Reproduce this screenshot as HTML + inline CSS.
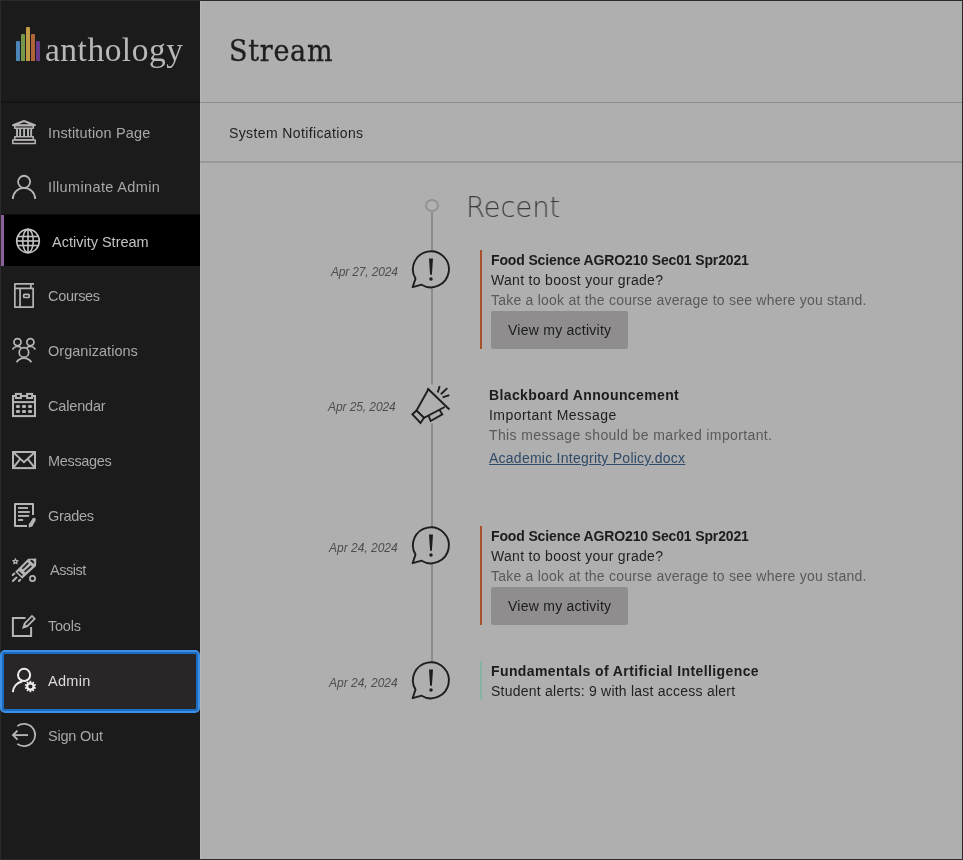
<!DOCTYPE html>
<html lang="en">
<head>
<meta charset="utf-8">
<title>Stream</title>
<style>
*{box-sizing:border-box;margin:0;padding:0}
html,body{width:963px;height:860px;overflow:hidden;background:#b0afaf}
body{position:relative;font-family:"Liberation Sans","DejaVu Sans",sans-serif;color:#1c1c1c}
#frame{position:absolute;left:0;top:0;width:963px;height:860px;pointer-events:none;z-index:50;border:1px solid #2a2a2a}
#side{position:absolute;left:0;top:0;width:200px;height:860px;background:#1c1b1c}
#side .logo{position:absolute;left:0;top:0;width:200px;height:101px}
#side .bar{position:absolute;width:4px;border-radius:1px 1px 0 0}
#side .brand{position:absolute;left:45px;top:28px;font-family:"Liberation Serif",serif;font-size:33.5px;line-height:44px;color:#b9b7b8;white-space:nowrap}
#side .sep{position:absolute;left:0;top:101px;width:200px;height:2px;background:#131313}
.nav{position:absolute;left:0;width:200px;height:55px;color:#a9a7a8;font-size:14.5px}
.nav svg{position:absolute;overflow:visible}
.nav span{position:absolute;top:0;line-height:55px;white-space:nowrap}
.activebg{position:absolute;left:0;top:215px;width:200px;height:51px;background:#000;box-shadow:0 -1px 0 #0e0e0e}
.activebg:before{content:"";position:absolute;left:1px;top:0;width:3px;height:100%;background:#8c5f9b}
.nav.active{color:#c4c2c3}
.nav.focus{color:#dcdadb;z-index:61}
.focusbox{position:absolute;left:0;top:650px;width:200px;height:63px;background:#282627;border:2px solid #3b8fe4;border-radius:5px;box-shadow:inset 0 0 0 2px #1d6cc4;z-index:60}
#main{position:absolute;left:200px;top:0;width:763px;height:860px;background:#b0afaf;box-shadow:inset 1px 0 0 #b9b8b8}
#main h1{position:absolute;left:28.5px;top:29px;-webkit-text-stroke:.3px #1e1e1e;font-family:"DejaVu Serif Condensed","DejaVu Serif","Liberation Serif",serif;font-weight:400;font-size:30px;line-height:44px;color:#1e1e1e;white-space:nowrap}
.hr1{position:absolute;left:0;top:102px;width:763px;height:1px;background:#908e8f}
.hr2{position:absolute;left:0;top:161px;width:763px;height:2px;background:#9a9899}
.sysn{position:absolute;left:29px;top:123px;font-size:14px;line-height:20px;color:#1f1f1f;white-space:nowrap}
.tl-line{position:absolute;left:231px;top:211px;width:2px;height:451px;background:#8c8a8b}
.tl-dot{position:absolute;left:225px;top:199px;width:14px;height:13px;border:2px solid #939192;border-radius:50%;background:#b3b2b2}
.recent{position:absolute;left:266px;top:186px;font-family:"DejaVu Sans Light","DejaVu Sans","Liberation Sans",sans-serif;font-weight:200;font-size:28.3px;line-height:44px;color:#3c3a3b;white-space:nowrap;transform:scaleX(.97);transform-origin:0 0}
.date{position:absolute;font-style:italic;font-size:12px;line-height:16px;color:#4e4c4d;white-space:nowrap}
.ico{position:absolute;width:40px;height:40px}
.ico svg{position:absolute;left:0;top:0;overflow:visible}
.t{position:absolute;font-size:14px;line-height:20px;white-space:nowrap}
.t.b{font-weight:700;color:#1c1c1c}
.t.l2{color:#1f1f1f}
.t.l3{color:#5a5859}
.t.lk a{color:#2e4a68;text-decoration:underline}
.vbar{position:absolute;width:2px}
.btn{position:absolute;width:137px;height:38px;line-height:38px;background:#8f8d8e;border-radius:2px;font-size:14px;color:#1c1c1c;text-align:center;white-space:nowrap}
.nav span,.brand,#main h1,.sysn,.recent,.date,.t,.btn span{will-change:transform}
.btn span{display:inline-block;line-height:20px;vertical-align:middle;position:relative;top:-1px}
</style>
</head>
<body>
<div id="side">
  <div class="logo">
    <div class="bar" style="left:16px;top:41px;height:20px;background:#4a86b8"></div>
    <div class="bar" style="left:21px;top:34px;height:27px;background:#76964a"></div>
    <div class="bar" style="left:26px;top:27px;height:34px;background:#c19c47"></div>
    <div class="bar" style="left:31px;top:34px;height:27px;background:#b06238"></div>
    <div class="bar" style="left:36px;top:41px;height:20px;background:#673a8a"></div>
    <div class="brand" style="letter-spacing:0.488px;">anthology</div>
  </div>
  <div class="sep"></div>
  <div class="nav" style="top:106px"><svg viewBox="0 0 24 24" width="24" height="24" style="left:12px;top:14px" ><g fill="none" stroke="#b6b4b5" stroke-width="1.5" stroke-linejoin="round"><path d="M1.1 5.2L12 1L22.9 5.2Z" stroke-width="2"/><rect x="2.75" y="5.6" width="18.5" height="2.6"/><g stroke-width="1.9"><path d="M5.05 8.5V16.5"/><path d="M8.15 8.5V16.5"/><path d="M12.1 8.5V16.5"/><path d="M16.05 8.5V16.5"/><path d="M19.15 8.5V16.5"/></g><rect x="2.75" y="16.7" width="18.5" height="3"/><rect x="0.75" y="19.9" width="22.5" height="3.5"/></g></svg><span style="left:48px;letter-spacing:0.153px;">Institution Page</span></div>
  <div class="nav" style="top:160px"><svg viewBox="0 0 24 24" width="24" height="24" style="left:12px;top:15px" ><g fill="none" stroke="#b6b4b5" stroke-width="1.8"><circle cx="12.1" cy="6.8" r="6.05"/><path d="M0.8 24.1A11.2 11.2 0 0 1 23.2 24.1"/></g></svg><span style="left:48px;letter-spacing:0.367px;">Illuminate Admin</span></div>
  <div class="activebg"></div>
  <div class="nav active" style="top:215px"><svg viewBox="0 0 24 24" width="24" height="24" style="left:16px;top:13.5px" ><g fill="none" stroke="#c4c2c3" stroke-width="1.6"><ellipse cx="12" cy="12" rx="11.3" ry="11.65"/><ellipse cx="12" cy="12" rx="5.3" ry="11.65"/><path d="M12 0.4V23.6"/><path d="M1.58 7.5H22.42"/><path d="M0.70 12H23.30"/><path d="M1.58 16.5H22.42"/></g></svg><span style="left:52px;">Activity Stream</span></div>
  <div class="nav" style="top:269px"><svg viewBox="0 0 24 24" width="24" height="24" style="left:12px;top:14px" ><g fill="none" stroke="#b6b4b5" stroke-width="1.7" stroke-linejoin="round"><path d="M22 0.9H2.85V24.1H21.15V5.4H2.85"/><path d="M18.9 0.9V5.4"/><path d="M8.05 5.4V24.1"/><rect x="11.7" y="11.3" width="5.5" height="3.2" rx="1"/></g></svg><span style="left:48px;letter-spacing:-0.317px;">Courses</span></div>
  <div class="nav" style="top:324px"><svg viewBox="0 0 24 24" width="24" height="24" style="left:12px;top:14px" ><g fill="none" stroke="#b6b4b5" stroke-width="1.7"><circle cx="5.5" cy="4.2" r="3.55"/><circle cx="18.4" cy="4.2" r="3.55"/><circle cx="11.95" cy="14.4" r="4.75"/><path d="M4.5 24.3A8.7 8.7 0 0 1 19.4 24.3"/><path d="M0.5 11.5A5.6 5.6 0 0 1 9.3 9.9"/><path d="M23.4 11.5A5.6 5.6 0 0 0 14.6 9.9"/></g></svg><span style="left:48px;letter-spacing:0.033px;">Organizations</span></div>
  <div class="nav" style="top:379px"><svg viewBox="0 0 24 24" width="24" height="24" style="left:12px;top:14px" ><g fill="none" stroke="#b6b4b5" stroke-width="2"><rect x="1" y="3" width="22" height="20.1"/><path d="M1 9.1H23"/><rect x="3.9" y="0.9" width="5" height="4.1" fill="#1c1b1c"/><rect x="15.1" y="0.9" width="5" height="4.1" fill="#1c1b1c"/><rect x="3.95" y="12.00" width="4" height="3" rx="1.2" fill="#b6b4b5" stroke="none"/><rect x="10.00" y="12.00" width="4" height="3" rx="1.2" fill="#b6b4b5" stroke="none"/><rect x="16.05" y="12.00" width="4" height="3" rx="1.2" fill="#b6b4b5" stroke="none"/><rect x="3.95" y="16.90" width="4" height="3" rx="1.2" fill="#b6b4b5" stroke="none"/><rect x="10.00" y="16.90" width="4" height="3" rx="1.2" fill="#b6b4b5" stroke="none"/><rect x="16.05" y="16.90" width="4" height="3" rx="1.2" fill="#b6b4b5" stroke="none"/></g></svg><span style="left:48px;letter-spacing:-0.171px;">Calendar</span></div>
  <div class="nav" style="top:434px"><svg viewBox="0 0 24 24" width="24" height="24" style="left:12px;top:14px" ><g fill="none" stroke="#b6b4b5" stroke-width="2" stroke-linejoin="miter"><rect x="1" y="4" width="22" height="16.1"/><path d="M1 4L11.95 14.2L23 4" stroke-width="1.9"/><path d="M1 20.1L8.2 10.8M23 20.1L15.7 10.8" stroke-width="1.9"/></g></svg><span style="left:48px;letter-spacing:-0.329px;">Messages</span></div>
  <div class="nav" style="top:489px"><svg viewBox="0 0 24 24" width="24" height="24" style="left:12px;top:14px" ><g fill="none" stroke="#b6b4b5" stroke-width="2" stroke-linejoin="round"><path d="M21 12V0.9H3V23.1H15"/><g stroke-width="1.9"><path d="M6 5H16"/><path d="M6 9H17.8"/><path d="M6 12.9H17.1"/><path d="M6 17H11.1"/></g><path d="M21.9 16.7L19 21.7" stroke-width="3.7" stroke-linecap="round"/><path d="M17.2 20.6L20.6 22.6L17 24.3Z" fill="#b6b4b5" stroke-width="0.6"/></g></svg><span style="left:48px;letter-spacing:-0.300px;">Grades</span></div>
  <div class="nav" style="top:543px"><svg viewBox="0 0 24 24" width="24" height="24" style="left:12px;top:15px" ><polygon points="24.3,0.4 16.2,0.7 3.2,13.7 10.2,20.8 24,8" fill="#b6b4b5"/><g fill="none" stroke="#1c1b1c" stroke-width="1.6" stroke-linecap="butt"><path d="M10.4 10.8L16.2 4.9"/><path d="M12.6 13.9L19.4 7.9"/><path d="M6.3 13.6L10.4 17.3"/><path d="M18.5 2.6Q21.3 2.8 21.5 5.4"/></g><polygon points="3.40,-0.20 4.58,1.88 6.92,2.36 5.30,4.12 5.57,6.49 3.40,5.50 1.23,6.49 1.50,4.12 -0.12,2.36 2.22,1.88" fill="#b6b4b5"/><circle cx="3.4" cy="3.5" r="0.8" fill="#1c1b1c"/><circle cx="20.5" cy="20.5" r="2.65" fill="none" stroke="#b6b4b5" stroke-width="1.7"/><g stroke="#b6b4b5" stroke-width="2" stroke-linecap="round"><path d="M0.7 17.1L2.4 15.6"/><path d="M0.9 23L4.5 19.6"/><path d="M6.9 23L8.2 21.7"/></g></svg><span style="left:50px;letter-spacing:-0.460px;">Assist</span></div>
  <div class="nav" style="top:599px"><svg viewBox="0 0 24 24" width="24" height="24" style="left:12px;top:15px" ><g fill="none" stroke="#b6b4b5" stroke-width="2"><path d="M13.5 3.9H0.9V22.1H19.1V13"/><path d="M11.3 13.6L12.65 9.55L20 2L22.7 4.7L15.3 12.2Z" stroke-width="1.7" stroke-linejoin="miter"/><path d="M10.9 14L12.65 9.55L15.3 12.2Z" fill="#b6b4b5" stroke="none"/></g></svg><span style="left:48px;letter-spacing:-0.225px;">Tools</span></div>
  <div class="focusbox"></div>
  <div class="nav focus" style="top:654px"><svg viewBox="0 0 24 24" width="24" height="24" style="left:12px;top:14px" ><g fill="none" stroke="#efeded" stroke-width="2"><circle cx="12.1" cy="6.9" r="6.05"/><path d="M0.9 24.1A11.2 11.2 0 0 1 10.2 13.4"/><circle cx="18.4" cy="18.5" r="3.2" stroke-width="2.2"/></g><g transform="translate(18.4 18.5)" fill="#efeded"><rect x="-0.85" y="-5.7" width="1.7" height="2.2" transform="rotate(0)"/><rect x="-0.85" y="-5.7" width="1.7" height="2.2" transform="rotate(36)"/><rect x="-0.85" y="-5.7" width="1.7" height="2.2" transform="rotate(72)"/><rect x="-0.85" y="-5.7" width="1.7" height="2.2" transform="rotate(108)"/><rect x="-0.85" y="-5.7" width="1.7" height="2.2" transform="rotate(144)"/><rect x="-0.85" y="-5.7" width="1.7" height="2.2" transform="rotate(180)"/><rect x="-0.85" y="-5.7" width="1.7" height="2.2" transform="rotate(216)"/><rect x="-0.85" y="-5.7" width="1.7" height="2.2" transform="rotate(252)"/><rect x="-0.85" y="-5.7" width="1.7" height="2.2" transform="rotate(288)"/><rect x="-0.85" y="-5.7" width="1.7" height="2.2" transform="rotate(324)"/></g></svg><span style="left:48px;letter-spacing:0.300px;">Admin</span></div>
  <div class="nav" style="top:709px"><svg viewBox="0 0 24 24" width="24" height="24" style="left:12px;top:14px" ><g fill="none" stroke="#b6b4b5" stroke-width="1.8"><path d="M5.3 3.1A11.15 11.15 0 1 1 5.3 20.9"/><path d="M1 12.1H16" stroke-width="1.9"/><path d="M5.5 7.6L1 12.1L5.5 16.6" stroke-width="1.9"/></g></svg><span style="left:48px;letter-spacing:-0.214px;">Sign Out</span></div>
</div>
<div id="main">
  <h1 style="letter-spacing:0.720px;">Stream</h1>
  <div class="hr1"></div>
  <div class="sysn" style="letter-spacing:0.384px;">System Notifications</div>
  <div class="hr2"></div>
  <div class="tl-line"></div>
  <div class="tl-dot"></div>
  <div class="recent" style="letter-spacing:-0.160px;">Recent</div>
  <!-- item 1 -->
  <div class="date" style="right:565px;top:264px;letter-spacing:-0.164px;">Apr 27, 2024</div>
  <div class="ico" style="left:211px;top:249px"><svg viewBox="0 0 40 40" width="40" height="40"><path d="M4.5 29.6A18 18 0 1 1 10.6 35.7L1.6 38.2Z" fill="#b0afaf" stroke="#1d1d1d" stroke-width="1.9" stroke-linejoin="round"/><path d="M18 9.5H22L20.9 25.8H19.1Z" fill="#1d1d1d"/><circle cx="20" cy="29.9" r="1.75" fill="#1d1d1d"/></svg></div>
  <div class="vbar" style="left:280px;top:250px;height:99px;background:#a8512a"></div>
  <div class="t b" style="left:291px;top:250px;letter-spacing:-0.139px;">Food Science AGRO210 Sec01 Spr2021</div>
  <div class="t l2" style="left:291px;top:270px;letter-spacing:0.313px;">Want to boost your grade?</div>
  <div class="t l3" style="left:291px;top:290px;letter-spacing:0.227px;">Take a look at the course average to see where you stand.</div>
  <div class="btn" style="left:291px;top:311px"><span style="letter-spacing:0.247px;">View my activity</span></div>
  <!-- item 2 -->
  <div class="date" style="right:567px;top:399px;letter-spacing:-0.091px;">Apr 25, 2024</div>
  <div class="ico" style="left:211px;top:385px"><svg viewBox="0 0 40 40" width="40" height="40"><rect x="18" y="-0.5" width="6" height="39" fill="#b0afaf"/><g fill="none" stroke="#1d1d1d" stroke-width="1.9" stroke-linejoin="miter"><path d="M17.4 4.3L5.5 25.5L13 32.8L33.7 22"/><path d="M16.4 3.3L38.4 24.5"/><path d="M5.5 25.5L1.4 29.3L9.5 38L13 32.8"/><path d="M17.7 31L19.7 36L31.3 29.3L28.7 25.2"/><path d="M28.7 1.1L26.7 7.5M36.3 3.1L29.9 9.2M38.3 10.2L31.6 12.4" stroke-width="1.9"/></g></svg></div>
  <div class="t b" style="left:289px;top:385px;letter-spacing:0.373px;">Blackboard Announcement</div>
  <div class="t l2" style="left:289px;top:405px;letter-spacing:0.462px;">Important Message</div>
  <div class="t l3" style="left:289px;top:425px;letter-spacing:0.372px;">This message should be marked important.</div>
  <div class="t lk" style="left:289px;top:448px;letter-spacing:0.248px;"><a>Academic Integrity Policy.docx</a></div>
  <!-- item 3 -->
  <div class="date" style="right:565px;top:540px;">Apr 24, 2024</div>
  <div class="ico" style="left:211px;top:525px"><svg viewBox="0 0 40 40" width="40" height="40"><path d="M4.5 29.6A18 18 0 1 1 10.6 35.7L1.6 38.2Z" fill="#b0afaf" stroke="#1d1d1d" stroke-width="1.9" stroke-linejoin="round"/><path d="M18 9.5H22L20.9 25.8H19.1Z" fill="#1d1d1d"/><circle cx="20" cy="29.9" r="1.75" fill="#1d1d1d"/></svg></div>
  <div class="vbar" style="left:280px;top:526px;height:99px;background:#a8512a"></div>
  <div class="t b" style="left:291px;top:526px;letter-spacing:-0.139px;">Food Science AGRO210 Sec01 Spr2021</div>
  <div class="t l2" style="left:291px;top:546px;letter-spacing:0.313px;">Want to boost your grade?</div>
  <div class="t l3" style="left:291px;top:566px;letter-spacing:0.227px;">Take a look at the course average to see where you stand.</div>
  <div class="btn" style="left:291px;top:587px"><span style="letter-spacing:0.247px;">View my activity</span></div>
  <!-- item 4 -->
  <div class="date" style="right:565px;top:675px;">Apr 24, 2024</div>
  <div class="ico" style="left:211px;top:660px"><svg viewBox="0 0 40 40" width="40" height="40"><path d="M4.5 29.6A18 18 0 1 1 10.6 35.7L1.6 38.2Z" fill="#b0afaf" stroke="#1d1d1d" stroke-width="1.9" stroke-linejoin="round"/><path d="M18 9.5H22L20.9 25.8H19.1Z" fill="#1d1d1d"/><circle cx="20" cy="29.9" r="1.75" fill="#1d1d1d"/></svg></div>
  <div class="vbar" style="left:280px;top:661px;height:39px;background:#86b3a2"></div>
  <div class="t b" style="left:291px;top:661px;letter-spacing:0.403px;">Fundamentals of Artificial Intelligence</div>
  <div class="t l2" style="left:291px;top:681px;letter-spacing:0.233px;">Student alerts: 9 with last access alert</div>
</div>
<div id="frame"></div>
</body>
</html>
